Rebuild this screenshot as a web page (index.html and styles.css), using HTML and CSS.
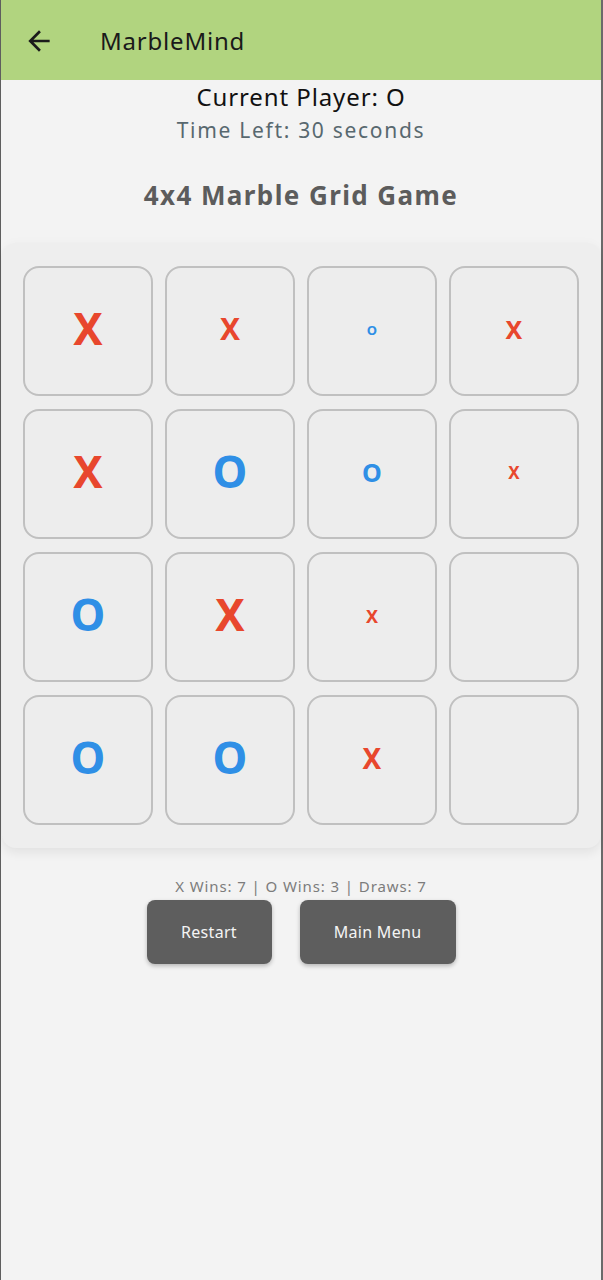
FILE: index.html
```html
<!DOCTYPE html>
<html>
<head>
<meta charset="utf-8">
<link rel="stylesheet" href="styles.css">
</head>
<body>
<div class="screen">
  <header class="appbar">
    <svg class="back" viewBox="0 0 24 24" width="32" height="32"><path d="M20 11H7.83l5.59-5.59L12 4l-8 8 8 8 1.41-1.41L7.83 13H20v-2z" fill="#1b1b1b"/></svg>
    <span class="apptitle">MarbleMind</span>
  </header>
  <main class="content">
    <div class="player">Current Player: O</div>
    <div class="timer">Time Left: 30 seconds</div>
    <h1 class="gametitle">4x4 Marble Grid Game</h1>
    <section class="board">
      <div class="cell"><span class="mark x s44">X</span></div>
      <div class="cell"><span class="mark x s30">X</span></div>
      <div class="cell"><span class="mark o s14">O</span></div>
      <div class="cell"><span class="mark x s25">X</span></div>

      <div class="cell"><span class="mark x s44">X</span></div>
      <div class="cell"><span class="mark o s44">O</span></div>
      <div class="cell"><span class="mark o s25">O</span></div>
      <div class="cell"><span class="mark x s17">X</span></div>

      <div class="cell"><span class="mark o s44">O</span></div>
      <div class="cell"><span class="mark x s44">X</span></div>
      <div class="cell"><span class="mark x s18">X</span></div>
      <div class="cell"></div>

      <div class="cell"><span class="mark o s44">O</span></div>
      <div class="cell"><span class="mark o s44">O</span></div>
      <div class="cell"><span class="mark x s28">X</span></div>
      <div class="cell"></div>
    </section>
    <div class="stats">X Wins: 7 | O Wins: 3 | Draws: 7</div>
    <div class="actions">
      <button class="btn restart">Restart</button>
      <button class="btn menu">Main Menu</button>
    </div>
  </main>
</div>
</body>
</html>
```

FILE: styles.css
```css
* { box-sizing: border-box; }
html, body { margin: 0; padding: 0; }
body {
  background: #f3f3f3;
  font-family: "Noto Sans", "Open Sans", sans-serif;
}
.screen {
  width: 603px;
  min-height: 1280px;
  border-left: 1px solid #5e5e5e;
  border-right: 2px solid #6a6a6a;
  background: #f3f3f3;
}
.appbar {
  height: 80px;
  background: #b1d47f;
  display: flex;
  align-items: center;
  padding-left: 22px;
}
.back { display: block; margin-top: 1px; }
.apptitle {
  margin-left: 45px;
  font-size: 24px;
  color: #1a1a1a;
  letter-spacing: 0.8px;
}
.content {
  display: flex;
  flex-direction: column;
  align-items: center;
}
.player {
  margin-top: 2px;
  font-size: 24px;
  line-height: 30px;
  color: #111;
  letter-spacing: 0.9px;
}
.timer {
  margin-top: 5px;
  font-size: 21px;
  line-height: 27px;
  color: #58686f;
  letter-spacing: 1.7px;
}
.gametitle {
  margin: 34px 0 0;
  font-size: 26px;
  line-height: 34px;
  font-weight: 700;
  color: #5c5c5c;
  letter-spacing: 1.4px;
}
.board {
  margin-top: 31px;
  align-self: stretch;
  margin-left: 1px;
  margin-right: 0;
  padding: 23px 21px 23px 21px;
  background: #eeeeee;
  border-radius: 14px;
  box-shadow: 0 6px 10px rgba(0,0,0,0.06), 0 -2px 8px rgba(0,0,0,0.02);
  display: grid;
  grid-template-columns: repeat(4, 130px);
  grid-auto-rows: 130px;
  column-gap: 12px;
  row-gap: 13px;
}
.cell {
  background: #ededed;
  border: 2px solid #c0c0c0;
  border-radius: 16px;
  display: flex;
  align-items: center;
  justify-content: center;
}
.mark {
  font-weight: 700;
  line-height: 1;
  margin-bottom: 0.14em;
  font-family: "Noto Sans", "Open Sans", sans-serif;
}
.mark.x { color: #e8472d; }
.mark.o { color: #2f8fe6; }
.s44 { font-size: 44px; }
.s30 { font-size: 30px; }
.s28 { font-size: 28px; }
.s25 { font-size: 25px; }
.s18 { font-size: 18px; }
.s17 { font-size: 17px; }
.s14 { font-size: 13px; }
.stats {
  margin-top: 28px;
  font-size: 15px;
  line-height: 20px;
  color: #7c7c7c;
  letter-spacing: 0.9px;
}
.actions {
  margin-top: 4px;
  display: flex;
  gap: 28px;
}
.btn {
  height: 64px;
  border: none;
  border-radius: 8px;
  background: #5e5e5e;
  color: #f4f4f4;
  font-family: "Noto Sans", "Open Sans", sans-serif;
  font-size: 16px;
  letter-spacing: 0.3px;
  box-shadow: 0 2px 4px rgba(0,0,0,0.25);
}
.restart { width: 125px; }
.menu { width: 156px; }
```
